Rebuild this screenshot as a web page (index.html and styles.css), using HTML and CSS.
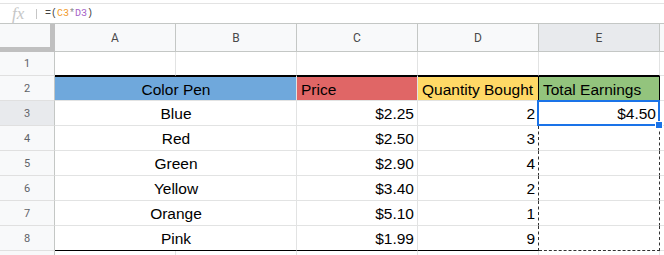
FILE: index.html
```html
<!DOCTYPE html>
<html lang="en">
<head>
    <meta charset="UTF-8">
    <title>Color Pen Sheet</title>
    <link rel="stylesheet" href="styles.css">
</head>
<body>

    <div class="formula-bar">
        <span class="fx">fx</span>
        <span class="sep"></span>
        <span class="formula">=(<span class="ref-c">C3</span><span class="op">*</span><span class="ref-d">D3</span>)</span>
    </div>

    <div class="sheet">
        <!-- column headers -->
        <div class="corner"></div>
        <div class="col-head">A</div>
        <div class="col-head">B</div>
        <div class="col-head">C</div>
        <div class="col-head">D</div>
        <div class="col-head active">E</div>
        <div class="col-head"></div>

        <!-- row 1 -->
        <div class="row-head">1</div>
        <div class="c top-black"></div>
        <div class="c top-black"></div>
        <div class="c top-black"></div>
        <div class="c top-black"></div>
        <div class="c top-black"></div>
        <div class="c"></div>

        <!-- row 2 -->
        <div class="row-head">2</div>
        <div class="c head-cell center blue span2">Color Pen</div>
        <div class="c head-cell red">Price</div>
        <div class="c head-cell yellow right-black">Quantity Bought</div>
        <div class="c head-cell green right-black">Total Earnings</div>
        <div class="c"></div>

        <!-- row 3 -->
        <div class="row-head active">3</div>
        <div class="c center span2">Blue</div>
        <div class="c num">$2.25</div>
        <div class="c num">2</div>
        <div class="c num selected dash-right">$4.50</div>
        <div class="c"></div>

        <!-- row 4 -->
        <div class="row-head">4</div>
        <div class="c center span2">Red</div>
        <div class="c num">$2.50</div>
        <div class="c num dash-right">3</div>
        <div class="c dash-right"></div>
        <div class="c"></div>

        <!-- row 5 -->
        <div class="row-head">5</div>
        <div class="c center span2">Green</div>
        <div class="c num">$2.90</div>
        <div class="c num dash-right">4</div>
        <div class="c dash-right"></div>
        <div class="c"></div>

        <!-- row 6 -->
        <div class="row-head">6</div>
        <div class="c center span2">Yellow</div>
        <div class="c num">$3.40</div>
        <div class="c num dash-right">2</div>
        <div class="c dash-right"></div>
        <div class="c"></div>

        <!-- row 7 -->
        <div class="row-head">7</div>
        <div class="c center span2">Orange</div>
        <div class="c num">$5.10</div>
        <div class="c num dash-right">1</div>
        <div class="c dash-right"></div>
        <div class="c"></div>

        <!-- row 8 -->
        <div class="row-head">8</div>
        <div class="c center span2 bottom-black">Pink</div>
        <div class="c num bottom-black">$1.99</div>
        <div class="c num dash-right bottom-black">9</div>
        <div class="c dash-right dash-bottom"></div>
        <div class="c"></div>

        <!-- row 9, cut off by the window -->
        <div class="row-head stub"></div>
        <div class="c stub"></div>
        <div class="c stub"></div>
        <div class="c stub"></div>
        <div class="c stub"></div>
        <div class="c stub"></div>
        <div class="c stub"></div>
    </div>

</body>
</html>
```

FILE: styles.css
```css
body {
    margin: 0;
    padding: 0;
    overflow: hidden;
    background-color: #fff;
    font-family: "Liberation Sans", Arial, sans-serif;
}

.formula-bar {
    margin-top: 3px;
    height: 21px;
    box-sizing: border-box;
    border-top: 1px solid #e3e3e3;
    border-bottom: 1px solid #c4c7c5;
    display: flex;
    align-items: center;
}

.fx {
    margin-left: 12px;
    width: 16px;
    font-family: "Liberation Serif", serif;
    font-style: italic;
    font-size: 17px;
    color: #c6c6c6;
    line-height: 1;
}

.sep {
    width: 1px;
    height: 10px;
    margin-left: 8px;
    margin-right: 8px;
    background-color: #c6c6c6;
}

.formula {
    font-family: "Liberation Mono", monospace;
    font-size: 10px;
    color: #444;
}

.ref-c {
    color: #f29c2b;
}

.ref-d {
    color: #a662c7;
}

.op {
    color: #8a8a8a;
}

.sheet {
    display: grid;
    grid-template-columns: 55px repeat(5, 121px) 1fr;
    grid-template-rows: 28px 24px repeat(7, 25px) 4px;
}

.corner {
    background-color: #f8f9fa;
    border-right: 5px solid #c0c0c0;
    border-bottom: 5px solid #c0c0c0;
}

.col-head {
    box-sizing: border-box;
    background-color: #f8f9fa;
    border-right: 1px solid #c4c7c5;
    border-bottom: 1px solid #c4c7c5;
    display: flex;
    align-items: center;
    justify-content: center;
    font-family: Roboto, "Liberation Sans", sans-serif;
    font-size: 12px;
    color: #4a4a4a;
}

.row-head {
    box-sizing: border-box;
    background-color: #f8f9fa;
    border-right: 1px solid #c4c7c5;
    border-bottom: 1px solid #e0e0e0;
    display: flex;
    align-items: center;
    justify-content: center;
    font-family: Roboto, "Liberation Sans", sans-serif;
    font-size: 11px;
    color: #5f6368;
}

.col-head.active,
.row-head.active {
    background-color: #e8eaed;
}

.c {
    box-sizing: border-box;
    position: relative;
    border-right: 1px solid #e2e3e3;
    border-bottom: 1px solid #e2e3e3;
    display: flex;
    align-items: center;
    padding: 1px 3px 0 4px;
    font-size: 15.5px;
    color: #000;
    white-space: nowrap;
}

.stub {
    border-bottom: none;
}

.span2 {
    grid-column: span 2;
}

.center {
    justify-content: center;
}

.num {
    justify-content: flex-end;
}

.head-cell {
    padding-top: 4px;
    box-shadow: inset 0 1px 0 #000;
}

.blue {
    background-color: #6fa8dc;
}

.red {
    background-color: #e06666;
}

.yellow {
    background-color: #ffd966;
}

.green {
    background-color: #93c47d;
}

.top-black {
    border-bottom-color: #000;
}

.bottom-black {
    border-bottom-color: #000;
}

.right-black {
    border-right-color: #000;
}

.dash-right {
    border-right: 1px dashed #333;
}

.dash-bottom {
    border-bottom: 1px dashed #333;
}

/* selected cell E3 */
.selected::after {
    content: "";
    position: absolute;
    top: -1px;
    left: -2px;
    right: -1px;
    bottom: -1px;
    border: 2px solid #1a73e8;
    z-index: 2;
}

.selected::before {
    content: "";
    position: absolute;
    right: -4px;
    bottom: -4px;
    width: 6px;
    height: 6px;
    background-color: #1a73e8;
    border: 1px solid #fff;
    z-index: 3;
}
```
